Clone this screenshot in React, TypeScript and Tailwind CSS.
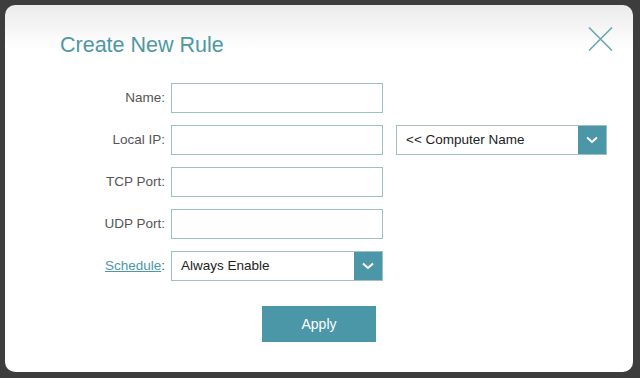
import React, { useState } from "react";

const inputCls =
  "h-[30px] w-[212px] border border-[#9fbfc4] bg-white px-2 text-[13px] text-[#222] outline-none";

function Row({ label, children }: { label: React.ReactNode; children: React.ReactNode }) {
  return (
    <div className="flex items-center gap-[6px]">
      <div className="w-[105px] text-right text-[13.5px] text-[#555]">{label}</div>
      {children}
    </div>
  );
}

function Chevron() {
  return (
    <svg width="12" height="8" viewBox="0 0 12 8" fill="none">
      <path d="M1 1.5 L6 6 L11 1.5" stroke="white" strokeWidth="2" />
    </svg>
  );
}

function Select({ value, width }: { value: string; width: string }) {
  return (
    <div className={`flex h-[30px] ${width} border border-[#9fbfc4] bg-white`}>
      <div className="flex flex-1 items-center px-[9px] text-[13.5px] text-[#222]">{value}</div>
      <div className="flex w-[28px] items-center justify-center bg-[#4b97a8]">
        <Chevron />
      </div>
    </div>
  );
}

export default function App() {
  const [name, setName] = useState("");
  const [ip, setIp] = useState("");
  const [tcp, setTcp] = useState("");
  const [udp, setUdp] = useState("");

  return (
    <div
      className="h-[378px] w-[640px] bg-[#3d3d3d] p-[5px] pr-[7px] pb-[6px]"
      style={{ fontFamily: '"Liberation Sans", Arial, sans-serif' }}
    >
      <div className="relative flex h-full flex-col rounded-[10px] bg-gradient-to-b from-[#ebebeb] via-white via-[12%] to-white pl-[55px] pt-[28px] pb-[30px]">
        <button className="absolute right-[20px] top-[22px]">
          <svg width="25" height="24" viewBox="0 0 25 24" fill="none">
            <path d="M1 0.5 L24 23.5 M24 0.5 L1 23.5" stroke="#6aa8b0" strokeWidth="1.6" />
          </svg>
        </button>

        <h1 className="text-[21.5px] leading-[24px] text-[#4f98a3]">Create New Rule</h1>

        <div className="mt-[26px] flex flex-col gap-[12px]">
          <Row label="Name:">
            <input className={inputCls} value={name} onChange={(e) => setName(e.target.value)} />
          </Row>
          <Row label="Local IP:">
            <input className={inputCls} value={ip} onChange={(e) => setIp(e.target.value)} />
            <div className="ml-[7px]">
              <Select value="<< Computer Name" width="w-[211px]" />
            </div>
          </Row>
          <Row label="TCP Port:">
            <input className={inputCls} value={tcp} onChange={(e) => setTcp(e.target.value)} />
          </Row>
          <Row label="UDP Port:">
            <input className={inputCls} value={udp} onChange={(e) => setUdp(e.target.value)} />
          </Row>
          <Row
            label={
              <>
                <a href="#" className="text-[#4a98a8] underline">Schedule</a>:
              </>
            }
          >
            <Select value="Always Enable" width="w-[212px]" />
          </Row>
        </div>

        <div className="mt-[25px] flex justify-center pr-[55px]">
          <button className="h-[36px] w-[114px] bg-[#4b97a8] text-[14px] text-white">Apply</button>
        </div>
      </div>
    </div>
  );
}
